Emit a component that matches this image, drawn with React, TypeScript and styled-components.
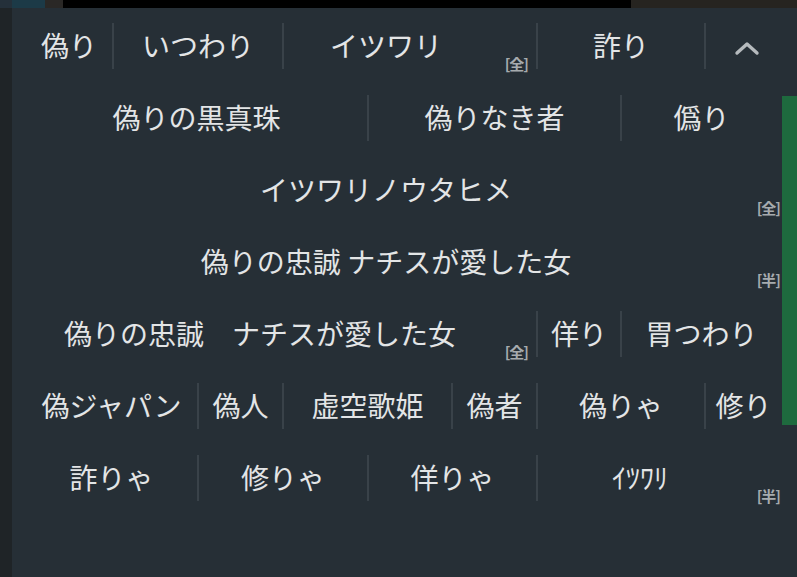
import React from 'react';
import styled, { createGlobalStyle } from 'styled-components';

const Global = createGlobalStyle`
  html, body { margin: 0; padding: 0; background: #262f36; }
  body { font-family: "Noto Sans CJK JP", "Noto Sans", sans-serif; }
`;

const Screen = styled.div`
  width: 797px;
  height: 577px;
  display: flex;
  flex-direction: column;
  overflow: hidden;
  background: #262f36;
`;

const TopStrip = styled.div`
  display: flex;
  height: 8px;
  flex-shrink: 0;
`;

const StripPart = styled.div<{ $w?: number; $bg: string }>`
  width: ${({ $w }) => ($w ? `${$w}px` : 'auto')};
  flex: ${({ $w }) => ($w ? '0 0 auto' : '1')};
  background: ${({ $bg }) => $bg};
`;

const Body = styled.div`
  flex: 1;
  display: flex;
`;

const Rail = styled.div`
  width: 12px;
  background: #1f2427;
`;

const Panel = styled.div`
  width: 770px;
  padding-top: 2px;
  display: flex;
  flex-direction: column;
`;

const Track = styled.div`
  width: 15px;
  display: flex;
  flex-direction: column;
`;

const Thumb = styled.div`
  margin-top: 88px;
  height: 329px;
  background: #1e6a3e;
`;

const Row = styled.div`
  display: flex;
  height: 72px;
  align-items: center;
`;

const Cell = styled.div<{ $w: number; $first: boolean; $pad: number }>`
  position: relative;
  width: ${({ $w }) => $w}px;
  height: 72px;
  display: flex;
  align-items: center;
  justify-content: center;
  box-sizing: border-box;
  padding-left: ${({ $first }) => ($first ? 13 : 0)}px;
  padding-right: ${({ $pad }) => $pad}px;
  padding-bottom: 2px;
  color: #e3e5e6;
  font-size: 28px;
  white-space: pre;
  &::before {
    content: '';
    display: ${({ $first }) => ($first ? 'none' : 'block')};
    position: absolute;
    left: -1px;
    top: 13px;
    height: 46px;
    width: 2px;
    background: #394249;
  }
`;

const Tag = styled.span<{ $edge: boolean }>`
  position: absolute;
  right: ${({ $edge }) => ($edge ? 2 : 9)}px;
  bottom: 10px;
  font-family: "Noto Sans CJK JP", sans-serif;
  font-size: 15px;
  line-height: 16px;
  font-weight: 700;
  color: #a6abae;
  letter-spacing: -1px;
`;

const ChevronBox = styled.span`
  display: flex;
  margin-top: 6px;
  margin-left: 6px;
`;

const Chevron = () => (
  <ChevronBox>
    <svg width="26" height="16" viewBox="0 0 26 16">
      <polyline points="3,13 13,4 23,13" fill="none" stroke="#b5babd" strokeWidth="3.4" strokeLinecap="round" strokeLinejoin="round" />
    </svg>
  </ChevronBox>
);

type Item = { w: number; text?: string; tag?: string; pad?: number; edge?: boolean; chevron?: boolean };

const rows: Item[][] = [
  [
    { w: 101, text: '偽り' },
    { w: 170, text: 'いつわり' },
    { w: 254, text: 'イツワリ', tag: '[全]', pad: 48 },
    { w: 168, text: '詐り' },
    { w: 77, chevron: true },
  ],
  [
    { w: 356, text: '偽りの黒真珠' },
    { w: 253, text: '偽りなき者' },
    { w: 161, text: '僞り' },
  ],
  [{ w: 770, text: 'イツワリノウタヒメ', tag: '[全]', pad: 35, edge: true }],
  [{ w: 770, text: '偽りの忠誠 ナチスが愛した女', tag: '[半]', pad: 35, edge: true }],
  [
    { w: 525, text: '偽りの忠誠　ナチスが愛した女', tag: '[全]', pad: 42 },
    { w: 84, text: '佯り' },
    { w: 161, text: '胃つわり' },
  ],
  [
    { w: 186, text: '偽ジャパン' },
    { w: 85, text: '偽人' },
    { w: 169, text: '虚空歌姫' },
    { w: 85, text: '偽者' },
    { w: 168, text: '偽りゃ' },
    { w: 77, text: '修り' },
  ],
  [
    { w: 186, text: '詐りゃ' },
    { w: 170, text: '修りゃ' },
    { w: 169, text: '佯りゃ' },
    { w: 245, text: 'ｲﾂﾜﾘ', tag: '[半]', pad: 39, edge: true },
  ],
];

const App: React.FC = () => (
  <>
    <Global />
    <Screen>
      <TopStrip>
        <StripPart $w={12} $bg="#24303a" />
        <StripPart $w={33} $bg="#1c3a47" />
        <StripPart $w={18} $bg="#2a2826" />
        <StripPart $w={568} $bg="#000000" />
        <StripPart $bg="#262420" />
      </TopStrip>
      <Body>
        <Rail />
        <Panel>
          {rows.map((row, ri) => (
            <Row key={ri}>
              {row.map((it, ci) => (
                <Cell key={ci} $w={it.w} $first={ci === 0} $pad={it.pad ?? 0}>
                  {it.chevron ? <Chevron /> : it.text}
                  {it.tag && <Tag $edge={!!it.edge}>{it.tag}</Tag>}
                </Cell>
              ))}
            </Row>
          ))}
        </Panel>
        <Track>
          <Thumb />
        </Track>
      </Body>
    </Screen>
  </>
);

export default App;
